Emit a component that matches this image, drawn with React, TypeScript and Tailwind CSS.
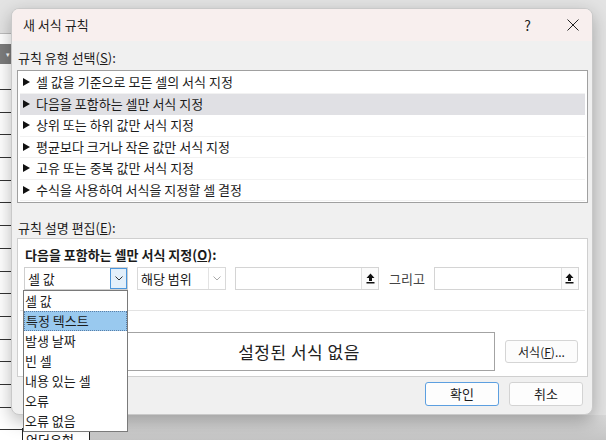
import React from 'react';

const ruleTypes = [
  '셀 값을 기준으로 모든 셀의 서식 지정',
  '다음을 포함하는 셀만 서식 지정',
  '상위 또는 하위 값만 서식 지정',
  '평균보다 크거나 작은 값만 서식 지정',
  '고유 또는 중복 값만 서식 지정',
  '수식을 사용하여 서식을 지정할 셀 결정',
];

const dropdownItems = ['셀 값', '특정 텍스트', '발생 날짜', '빈 셀', '내용 있는 셀', '오류', '오류 없음'];

function Chevron({ color = '#555' }: { color?: string }) {
  return (
    <svg width="8" height="5" viewBox="0 0 8 5">
      <polyline points="0.5,0.5 4,4 7.5,0.5" fill="none" stroke={color} strokeWidth="1" />
    </svg>
  );
}

function CollapseIcon() {
  return (
    <svg width="9" height="11" viewBox="0 0 9 11">
      <path d="M4.5 0.5 L8.5 5 H6 V8 H3 V5 H0.5 Z" fill="#111" />
      <rect x="0.5" y="9" width="8" height="1.5" fill="#111" />
    </svg>
  );
}

function Triangle() {
  return (
    <svg width="7" height="8" viewBox="0 0 7 8" className="shrink-0">
      <polygon points="0,0 7,4 0,8" fill="#111" />
    </svg>
  );
}

function RefBox({ width }: { width: string }) {
  return (
    <div className={`flex h-[23px] ${width} border border-[#d4d4d4] bg-white`}>
      <div className="flex-1" />
      <div className="flex w-[17px] items-center justify-center border-l border-[#e0e0e0] bg-[#fbfbfb]">
        <CollapseIcon />
      </div>
    </div>
  );
}

export default function App() {
  return (
    <div className="relative h-[440px] w-[606px] overflow-hidden bg-[#e3e3e3] font-['Noto_Sans_CJK_KR',sans-serif] text-[13px] leading-[16px] text-[#1b1b1b]">
      {/* spreadsheet behind the dialog */}
      <div className="absolute left-0 top-[33px] bottom-0 w-[90px] border-t border-[#bdbdbd] bg-white">
        <div className="mt-[10px] flex h-[20px] w-[11px] items-center justify-end bg-[#7d7d7d] pr-[1px] text-[7px] text-white">▾</div>
        <div className="mt-[25px] flex flex-col">
          {Array.from({ length: 16 }).map((_, i) => (
            <div key={i} className="h-[22.7px] border-t border-[#333]" />
          ))}
        </div>
      </div>
      <div className="absolute left-[90px] right-0 bottom-0 h-[25px] bg-gradient-to-b from-[#d9d9d9] to-[#c4c4c4]" />
      <div className="absolute left-[22px] top-[428px] h-[20px] w-[68px] border-x border-t border-[#222] bg-white pl-[3px] pt-[3px] text-[13px]">
        언더유형
      </div>

      {/* dialog window */}
      <div className="absolute left-[11px] top-[8px] flex h-[407px] w-[582px] flex-col overflow-hidden rounded-[8px] border border-[#c9c9c9] bg-[#f0f0f0] shadow-[0_6px_18px_rgba(0,0,0,0.28)]">
        <div className="flex h-[32px] shrink-0 items-center bg-[#f8efee] pl-[11px] pr-[13px]">
          <span className="text-[13px]">새 서식 규칙</span>
          <div className="flex-1" />
          <span className="mr-[36px] text-[14px] text-[#222]">?</span>
          <svg width="12" height="12" viewBox="0 0 12 12">
            <path d="M0.5 0.5 L11.5 11.5 M11.5 0.5 L0.5 11.5" stroke="#222" strokeWidth="1" />
          </svg>
        </div>

        <div className="flex flex-1 flex-col pl-[5px] pr-[4px]">
          <div className="ml-[1px] mt-[9px] h-[16px]">
            규칙 유형 선택(<span className="underline">S</span>):
          </div>
          <div className="mt-[4px] h-[133px] border border-[#a0a0a0] bg-white px-[2px] pt-[1px]">
            {ruleTypes.map((t, i) => (
              <div
                key={t}
                className={`flex h-[21.5px] items-center gap-[6px] border-b pl-[3px] ${
                  i === 1 ? 'border-transparent bg-[#e0e0e4]' : 'border-[#f2f2f2]'
                }`}
              >
                <Triangle />
                <span>{t}</span>
              </div>
            ))}
          </div>

          <div className="ml-[1px] mt-[17px] h-[16px]">
            규칙 설명 편집(<span className="underline">E</span>):
          </div>
          <div className="mt-[2px] flex h-[139px] flex-col border border-[#cfcfcf] bg-white">
            <div className="ml-[7px] mt-[8px] h-[16px] font-bold">
              다음을 포함하는 셀만 서식 지정(<span className="underline">O</span>):
            </div>
            <div className="ml-[6px] mt-[4px] flex h-[23px] items-center">
              <div className="flex h-[23px] w-[104px] border border-[#cfcfcf] bg-white">
                <span className="flex-1 pl-[3px] leading-[21px]">셀 값</span>
                <div className="flex w-[17px] items-center justify-center border border-[#4b97dd] bg-[#e3f0fb]">
                  <Chevron color="#333" />
                </div>
              </div>
              <div className="ml-[9px] flex h-[23px] w-[89px] border border-[#d9d9d9] bg-white">
                <span className="flex-1 pl-[3px] leading-[21px]">해당 범위</span>
                <div className="flex w-[17px] items-center justify-center border-l border-[#e3e3e3]">
                  <Chevron color="#aaa" />
                </div>
              </div>
              <div className="ml-[9px]">
                <RefBox width="w-[144px]" />
              </div>
              <span className="ml-[10px] text-[#444]">그리고</span>
              <div className="ml-[9px]">
                <RefBox width="w-[145px]" />
              </div>
            </div>
            <div className="mx-[2px] mt-[20px] border-t border-[#e3e3e3]" />
            <div className="mt-[21px] flex items-center">
              {/* preview label sits under the open dropdown */}
              <div className="w-[85px]" />
              <div className="flex h-[39px] w-[392px] items-center justify-center border border-[#a3a3a3] text-[17px] tracking-[0.5px] text-[#222]">
                설정된 서식 없음
              </div>
              <button className="ml-[10px] flex h-[23px] w-[73px] items-center justify-center rounded-[3px] border border-[#d5d5d5] bg-[#fcfcfc] text-[12px]">
                서식(<span className="underline">F</span>)...
              </button>
            </div>
          </div>

          <div className="mt-[5px] flex justify-end gap-[10px] pr-[5px]">
            <button className="flex h-[24px] w-[74px] items-center justify-center rounded-[3px] border border-[#5c9fe0] bg-[#fdfdfd]">
              확인
            </button>
            <button className="flex h-[24px] w-[74px] items-center justify-center rounded-[3px] border border-[#d3d3d3] bg-[#fdfdfd]">
              취소
            </button>
          </div>
        </div>
      </div>

      {/* open dropdown list */}
      <div className="absolute left-[23px] top-[290px] w-[105px] border border-[#7a7a7a] bg-white">
        {dropdownItems.map((d, i) => (
          <div
            key={d}
            className={`flex h-[20px] items-center pl-[1px] ${
              i === 1 ? 'border border-dotted border-[#5a7fa8] bg-[#99c9ef]' : ''
            }`}
          >
            {d}
          </div>
        ))}
      </div>
    </div>
  );
}
